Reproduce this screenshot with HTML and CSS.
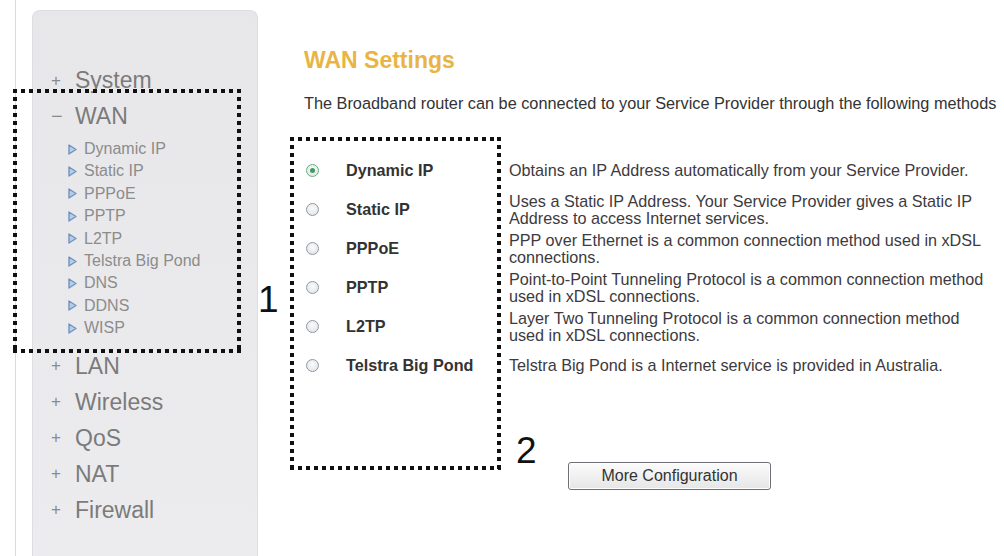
FILE: index.html
```html
<!DOCTYPE html>
<html>
<head>
<meta charset="utf-8">
<link rel="stylesheet" href="styles.css">
</head>
<body>
<div class="page">
  <div class="rail"></div>
  <nav class="sidebar">
    <div class="menu-item"><span class="sign">+</span>System</div>
    <div class="menu-item"><span class="sign minus">&minus;</span>WAN</div>
    <ul class="submenu">
      <li><svg class="tri" viewBox="0 0 9 11"><polygon points="1,1 8,5.5 1,10"/></svg>Dynamic IP</li>
      <li><svg class="tri" viewBox="0 0 9 11"><polygon points="1,1 8,5.5 1,10"/></svg>Static IP</li>
      <li><svg class="tri" viewBox="0 0 9 11"><polygon points="1,1 8,5.5 1,10"/></svg>PPPoE</li>
      <li><svg class="tri" viewBox="0 0 9 11"><polygon points="1,1 8,5.5 1,10"/></svg>PPTP</li>
      <li><svg class="tri" viewBox="0 0 9 11"><polygon points="1,1 8,5.5 1,10"/></svg>L2TP</li>
      <li><svg class="tri" viewBox="0 0 9 11"><polygon points="1,1 8,5.5 1,10"/></svg>Telstra Big Pond</li>
      <li><svg class="tri" viewBox="0 0 9 11"><polygon points="1,1 8,5.5 1,10"/></svg>DNS</li>
      <li><svg class="tri" viewBox="0 0 9 11"><polygon points="1,1 8,5.5 1,10"/></svg>DDNS</li>
      <li><svg class="tri" viewBox="0 0 9 11"><polygon points="1,1 8,5.5 1,10"/></svg>WISP</li>
    </ul>
    <div class="menu-item"><span class="sign">+</span>LAN</div>
    <div class="menu-item"><span class="sign">+</span>Wireless</div>
    <div class="menu-item"><span class="sign">+</span>QoS</div>
    <div class="menu-item"><span class="sign">+</span>NAT</div>
    <div class="menu-item"><span class="sign">+</span>Firewall</div>
  </nav>
  <main class="main">
    <h1 class="title">WAN Settings</h1>
    <p class="intro">The Broadband router can be connected to your Service Provider through the following methods</p>
    <div class="options">
      <div class="row">
        <span class="radio checked"></span>
        <span class="label">Dynamic IP</span>
        <span class="desc">Obtains an IP Address automatically from your Service Provider.</span>
      </div>
      <div class="row">
        <span class="radio"></span>
        <span class="label">Static IP</span>
        <span class="desc">Uses a Static IP Address. Your Service Provider gives a Static IP<br>Address to access Internet services.</span>
      </div>
      <div class="row">
        <span class="radio"></span>
        <span class="label">PPPoE</span>
        <span class="desc">PPP over Ethernet is a common connection method used in xDSL<br>connections.</span>
      </div>
      <div class="row">
        <span class="radio"></span>
        <span class="label">PPTP</span>
        <span class="desc">Point-to-Point Tunneling Protocol is a common connection method<br>used in xDSL connections.</span>
      </div>
      <div class="row">
        <span class="radio"></span>
        <span class="label">L2TP</span>
        <span class="desc">Layer Two Tunneling Protocol is a common connection method<br>used in xDSL connections.</span>
      </div>
      <div class="row">
        <span class="radio"></span>
        <span class="label">Telstra Big Pond</span>
        <span class="desc">Telstra Big Pond is a Internet service is provided in Australia.</span>
      </div>
    </div>
    <button class="more">More Configuration</button>
  </main>

  <div class="dotbox box1"></div>
  <div class="dotbox box2"></div>
  <span class="note note1">1</span>
  <span class="note note2">2</span>
</div>
</body>
</html>
```

FILE: styles.css
```css
* { box-sizing: border-box; }
html, body { margin: 0; padding: 0; background: #fff; }
body { font-family: "Liberation Sans", Arial, sans-serif; }

.page {
  position: relative;
  display: flex;
  width: 1004px;
  height: 556px;
  overflow: hidden;
}

.rail {
  width: 16px;
  border-right: 1px solid #dadada;
  flex: none;
}

.sidebar {
  flex: none;
  width: 226px;
  margin-left: 16px;
  margin-top: 10px;
  padding-top: 52px;
  background: linear-gradient(#e7e7ea, #ececee);
  border: 1px solid #dedee2;
  border-bottom: none;
  border-radius: 8px 8px 0 0;
}

.menu-item {
  height: 35.5px;
  line-height: 35.5px;
  font-size: 23px;
  color: #7b7b7b;
  padding-left: 18px;
  white-space: nowrap;
}
.submenu + .menu-item ~ .menu-item,
.submenu + .menu-item {
  height: 36px;
  line-height: 36px;
}

.sign {
  display: inline-block;
  width: 24px;
  font-size: 17px;
  vertical-align: top;
  color: #8a8a8a;
}
.sign.minus { font-size: 20px; }

.submenu {
  list-style: none;
  margin: 4px 0 8px;
  padding: 0 0 0 35px;
}
.submenu li {
  height: 22.4px;
  line-height: 22.4px;
  font-size: 16px;
  color: #8c8c8c;
  display: flex;
  align-items: center;
  white-space: nowrap;
}
.tri {
  width: 9px;
  height: 11px;
  margin-right: 7px;
  flex: none;
}
.tri polygon {
  fill: #b5cde6;
  stroke: #6f93bd;
  stroke-width: 1.4;
  stroke-linejoin: round;
}

.main {
  flex: none;
  margin-left: 46px;
  padding-top: 47px;
  width: 710px;
}

.title {
  margin: 0;
  font-size: 23px;
  line-height: 26px;
  font-weight: bold;
  color: #e8b545;
}

.intro {
  margin: 20px 0 0;
  font-size: 16.3px;
  line-height: 20px;
  color: #333;
  white-space: nowrap;
}

.options {
  margin-top: 38px;
}

.row {
  display: grid;
  grid-template-columns: 42px 163px 1fr;
  align-items: center;
  height: 39px;
}

.radio {
  margin-left: 2px;
  width: 13px;
  height: 13px;
  border-radius: 50%;
  border: 1px solid #8e9aa6;
  background: radial-gradient(circle at 50% 40%, #fbfbfb, #dcdfe3);
  position: relative;
}
.radio.checked {
  border-color: #6bae84;
}
.radio.checked::after {
  content: "";
  position: absolute;
  left: 3px;
  top: 3px;
  width: 5px;
  height: 5px;
  border-radius: 50%;
  background: #3f9c5e;
}

.label {
  font-size: 16.2px;
  font-weight: bold;
  color: #333;
  white-space: nowrap;
}

.desc {
  font-size: 16.2px;
  line-height: 16.5px;
  color: #3d3a40;
  white-space: nowrap;
}

.more {
  display: block;
  margin: 77px 0 0 264px;
  width: 203px;
  height: 28px;
  font-family: "Liberation Sans", Arial, sans-serif;
  font-size: 16px;
  color: #333;
  background: linear-gradient(#fbfbfb, #e6e6e6);
  border: 1px solid #6c7075;
  border-radius: 3px;
  box-shadow: inset 0 0 0 1px #fff;
}

.dotbox {
  position: absolute;
  background:
    linear-gradient(90deg, #111 50%, transparent 0) left top / 8px 4px repeat-x,
    linear-gradient(90deg, #111 50%, transparent 0) left bottom / 8px 4px repeat-x,
    linear-gradient(#111 50%, transparent 0) left top / 4px 8px repeat-y,
    linear-gradient(#111 50%, transparent 0) right top / 4px 8px repeat-y;
  pointer-events: none;
}
.box1 { left: 13px; top: 89px; width: 228px; height: 264px; }
.box2 { left: 290px; top: 137px; width: 211px; height: 333px; }

.note {
  position: absolute;
  font-size: 37px;
  line-height: 37px;
  color: #111;
}
.note1 { left: 258px; top: 281px; }
.note2 { left: 516px; top: 432px; }
```
